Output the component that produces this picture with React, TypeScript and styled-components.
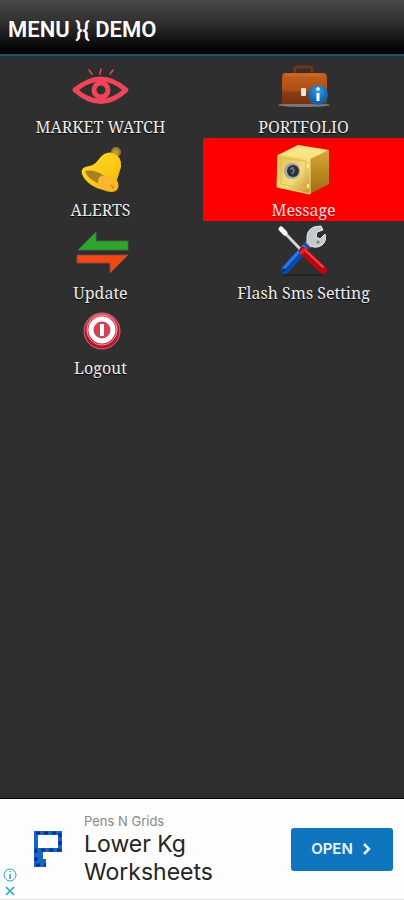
import React from "react";
import styled, { createGlobalStyle } from "styled-components";

const GlobalStyle = createGlobalStyle`
  * { box-sizing: border-box; }
  body { margin: 0; background: #2f2f2f; }
`;

const Screen = styled.div`
  display: flex;
  flex-direction: column;
  min-height: 100vh;
  background: #2f2f2f;
`;

const Header = styled.header`
  display: flex;
  align-items: center;
  height: 56px;
  padding: 5px 8px 0;
  border-bottom: 2px solid #1e5379;
  background: linear-gradient(#484848, #303030 40%, #050505 90%, #000);
`;

const Title = styled.h1`
  margin: 0;
  color: #fff;
  font: 600 22px/28px Roboto, sans-serif;
`;

const Menu = styled.nav`
  display: grid;
  grid-template-columns: 1fr 1fr;
  flex: 1;
  align-content: start;
  column-gap: 2px;
`;

const MenuItem = styled.button<{ $selected?: boolean }>`
  display: flex;
  flex-direction: column;
  align-items: center;
  padding: 0;
  border: 0;
  background: ${(p) => (p.$selected ? "#ff0000" : "transparent")};
  color: ${(p) => (p.$selected ? "#ffdede" : "#ececec")};
  font: 16px/21px "DejaVu Serif Condensed", "Noto Serif", "DejaVu Serif", serif;
  font-family: "Noto Serif", "DejaVu Serif Condensed", "DejaVu Serif", serif;
  text-shadow: 0 1px 1px ${(p) => (p.$selected ? "#b00000" : "#000")};
  white-space: nowrap;
  cursor: pointer;
`;

const Icon = styled.svg`
  display: block;
  width: 64px;
  flex: none;
`;

const Banner = styled.aside`
  display: flex;
  align-items: stretch;
  height: 102px;
  border-top: 1px solid #000;
  border-bottom: 1px solid #e4e4e4;
  background: #fdfdfd;
`;

const AdControls = styled.div`
  display: flex;
  flex-direction: column;
  justify-content: flex-end;
  width: 20px;
  padding: 0 2px;
`;

const AdControl = styled.button`
  display: block;
  width: 16px;
  height: 16px;
  padding: 0;
  border: 0;
  background: none;
  cursor: pointer;
  svg { display: block; }
`;

const Logo = styled.svg`
  align-self: center;
  width: 30px;
  height: 38px;
  margin-left: 13px;
`;

const AdText = styled.a`
  display: block;
  flex: 1;
  padding: 14px 0 0 21px;
  color: #242424;
  font: 23px/28px Inter, "Open Sans", sans-serif;
  text-decoration: none;
`;

const Advertiser = styled.span`
  display: block;
  color: #888;
  font-size: 13px;
  line-height: 17px;
`;

const OpenButton = styled.button`
  display: flex;
  align-items: center;
  justify-content: center;
  gap: 8px;
  align-self: center;
  width: 102px;
  height: 43px;
  margin: 0 11px 0 0;
  padding: 0;
  border: 0;
  border-radius: 3px;
  background: #1075bf;
  color: #e9f5ff;
  font: 600 15px/20px Inter, sans-serif;
  cursor: pointer;
`;

const Eye = () => (
  <Icon viewBox="0 0 64 61" height="61" fill="none" stroke="#f04459">
    <path d="M6 34Q32 12 57 34Q32 57 6 34Z" strokeWidth="5" strokeLinejoin="round" />
    <path d="M18 28Q32 20 46 28M18 40Q32 48 46 40" strokeWidth="2" />
    <circle cx="32" cy="34" r="7" strokeWidth="5" />
    <path d="M20 14l3 4M32 13l-1 5M44 14l-3 4" strokeWidth="1.5" strokeLinecap="round" />
  </Icon>
);

const Briefcase = () => (
  <Icon viewBox="0 0 64 61" height="61">
    <defs>
      <linearGradient id="leather" x2="0" y2="1">
        <stop stopColor="#c4601f" />
        <stop offset=".55" stopColor="#ac4e17" />
        <stop offset="1" stopColor="#7c3009" />
      </linearGradient>
      <radialGradient id="info" cy=".3">
        <stop stopColor="#3ba0e8" />
        <stop offset="1" stopColor="#1263ae" />
      </radialGradient>
    </defs>
    <ellipse cx="32" cy="49" rx="26" ry="2" fill="#777" />
    <path d="M23 18v-5q0-2 2-2h13q2 0 2 2v5" fill="none" stroke="#70351a" strokeWidth="3" />
    <path d="M13 17h38q4 0 4 5v26H10V22q0-5 3-5Z" fill="url(#leather)" />
    <path d="M10 34q12 3 22 2t23-3v15H10Z" fill="#72300e" opacity=".5" />
    <path d="M13 19h38" stroke="#d0742f" strokeWidth="1" />
    <rect x="29" y="32" width="5" height="8" rx="1" fill="#eee7dc" />
    <circle cx="46" cy="39" r="10" fill="url(#info)" />
    <path d="M46 37v8" stroke="#fff" strokeWidth="3" fill="none" />
    <circle cx="46" cy="33" r="1.8" fill="#fff" />
  </Icon>
);

const Bell = () => (
  <Icon viewBox="0 0 64 62" height="62">
    <defs>
      <linearGradient id="brass" x2="1" y2="1">
        <stop stopColor="#ffda30" />
        <stop offset=".6" stopColor="#fcc812" />
        <stop offset="1" stopColor="#eda51c" />
      </linearGradient>
    </defs>
    <circle cx="47" cy="14" r="5" fill="#987a22" />
    <path d="M43 14q3-5 7-1l-1 5Z" fill="#bd9932" />
    <path d="M30 21Q36 13 44 15Q53 18 52 29L48 42Q51 48 48 52Q44 56 34 52Q17 47 13 36Q11 29 20 28Q25 28 30 21Z" fill="url(#brass)" />
    <path d="M16 33Q24 31 36 38Q47 45 48 50Q39 52 28 45Q18 40 16 33Z" fill="#a9801e" />
    <path d="M29 43Q30 36 38 38Q47 41 49 50Q41 54 33 50Q28 48 29 43Z" fill="#ffb52e" />
    <path d="M41 46l5 3-3 2Z" fill="#d58b1d" />
  </Icon>
);

const Safe = () => (
  <Icon viewBox="0 0 64 62" height="62">
    <defs>
      <linearGradient id="door" x2="1" y2="1">
        <stop stopColor="#e4bd4a" />
        <stop offset=".55" stopColor="#f5dc7b" />
        <stop offset="1" stopColor="#c18c21" />
      </linearGradient>
      <linearGradient id="side" x2="0" y2="1">
        <stop stopColor="#d5a83a" />
        <stop offset="1" stopColor="#a36b10" />
      </linearGradient>
    </defs>
    <path d="M6 17l20-10 31 5-18 10Z" fill="#fae486" />
    <path d="M38 21l19-9v34L38 56Z" fill="url(#side)" />
    <path d="M6 17l32 4v35L5 49Z" fill="url(#door)" stroke="#f9df7c" />
    <path d="M9 20l25 3v28L9 46Z" fill="none" stroke="#dfbb58" />
    <circle cx="20" cy="33" r="8" fill="#a3a6a8" />
    <circle cx="21" cy="33" r="6" fill="#2a3036" />
    <path d="M18 31l3-1 1 3-2 3" stroke="#69767f" strokeWidth="2" fill="none" />
    <path d="M36 26v4M36 46v4" stroke="#ffeb9c" strokeWidth="2" />
  </Icon>
);

const Arrows = () => (
  <Icon viewBox="0 0 64 62" height="62">
    <path d="M9 29L27 11V20H59V29Z" fill="#30a52e" stroke="#3d7140" />
    <path d="M8 34H59L41 52V42H8Z" fill="#f34716" stroke="#8b4930" />
  </Icon>
);

const Tools = () => (
  <Icon viewBox="0 0 64 62" height="62" fill="none" strokeLinecap="round">
    <path d="M12 54h38" stroke="#222" strokeWidth="2" />
    <path d="M13 49L35 25" stroke="#0b47b0" strokeWidth="8" />
    <path d="M12 47L32 25" stroke="#267ce6" strokeWidth="3" />
    <path d="M36 24l6-6" stroke="#a7adb1" strokeWidth="8" strokeLinecap="butt" />
    <path d="M35 19Q34 9 42 6L49 5L51 9L45 11L44 16L48 18L53 13Q55 20 50 24Q44 28 39 25Z" fill="#c5cacc" stroke="#eceeee" />
    <circle cx="46" cy="21" r="1.5" fill="#777e82" />
    <path d="M10 9L31 31" stroke="#d5d5d5" strokeWidth="3" />
    <path d="M9 8l4 4" stroke="#fff" strokeWidth="5" />
    <path d="M31 30L51 49" stroke="#b80613" strokeWidth="8" />
    <path d="M33 29L51 46" stroke="#f14645" strokeWidth="2" />
    <path d="M29 32l5-5" stroke="#e42a2c" strokeWidth="3" />
    <circle cx="12" cy="49" r="1.5" fill="#08296b" />
  </Icon>
);

const Power = () => (
  <Icon viewBox="0 0 64 54" height="54">
    <defs>
      <radialGradient id="power" cy=".35">
        <stop stopColor="#ee5c70" />
        <stop offset=".75" stopColor="#dc3b52" />
        <stop offset="1" stopColor="#b9142d" />
      </radialGradient>
    </defs>
    <circle cx="33" cy="27" r="18" fill="url(#power)" stroke="#e98d97" strokeWidth=".7" />
    <circle cx="33" cy="26" r="15" fill="none" stroke="#f19aa5" strokeWidth="1" />
    <circle cx="33" cy="26" r="11" fill="#cf4355" stroke="#fff" strokeWidth="5" />
    <path d="M33 20v12" stroke="#fff" strokeWidth="4" />
  </Icon>
);

const items = [
  { label: "MARKET WATCH", icon: Eye },
  { label: "PORTFOLIO", icon: Briefcase },
  { label: "ALERTS", icon: Bell },
  { label: "Message", icon: Safe, selected: true },
  { label: "Update", icon: Arrows },
  { label: "Flash Sms Setting", icon: Tools },
  { label: "Logout", icon: Power },
];

export default function App() {
  return (
    <Screen>
      <GlobalStyle />
      <Header>
        <Title>MENU &#125;&#123; DEMO</Title>
      </Header>
      <Menu>
        {items.map(({ label, icon: Drawing, selected }) => (
          <MenuItem key={label} $selected={selected}>
            <Drawing />
            {label}
          </MenuItem>
        ))}
      </Menu>
      <Banner>
        <AdControls>
          <AdControl aria-label="Ad information">
            <svg width="16" height="16" fill="none" stroke="#20a8c2">
              <circle cx="8" cy="8" r="6" />
              <path d="M8 7v5M8 4v1" strokeWidth="1.5" />
            </svg>
          </AdControl>
          <AdControl aria-label="Close ad">
            <svg width="16" height="16" fill="none" stroke="#20a8c2" strokeWidth="1.5">
              <path d="M4 4l8 8M12 4l-8 8" />
            </svg>
          </AdControl>
        </AdControls>
        <Logo viewBox="0 0 30 38" fill="none">
          <path d="M3 3H27V20H3Z" stroke="#1467c5" strokeWidth="4" />
          <path d="M1 18H10V29H13V37H1Z" fill="#1467c5" />
          <path d="M3 3H27V20H3V35H13" stroke="#122c91" strokeWidth="3" strokeDasharray="4 4" />
        </Logo>
        <AdText href="#">
          <Advertiser>Pens N Grids</Advertiser>
          Lower Kg
          <br />
          Worksheets
        </AdText>
        <OpenButton>
          OPEN
          <svg width="12" height="14" fill="none" stroke="currentColor" strokeWidth="2.5">
            <path d="M3 2l5 5-5 5" />
          </svg>
        </OpenButton>
      </Banner>
    </Screen>
  );
}
